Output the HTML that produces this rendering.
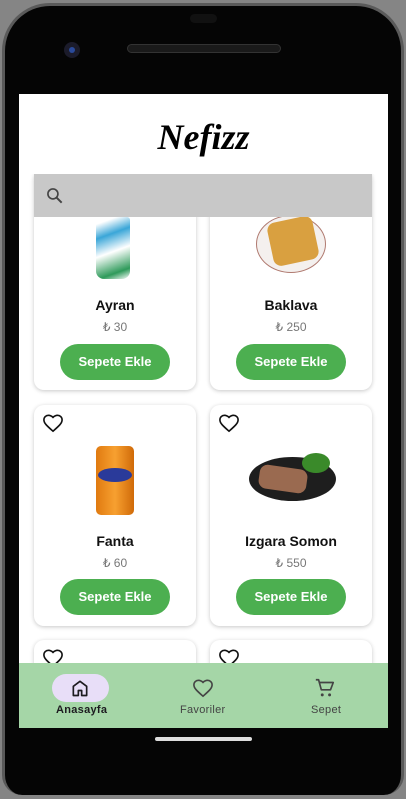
<!DOCTYPE html>
<html><head><meta charset="utf-8"><style>
*{margin:0;padding:0;box-sizing:border-box}
html,body{width:406px;height:799px;overflow:hidden}
body{background:#858585;position:relative;font-family:"Liberation Sans",sans-serif}
.phone{position:absolute;left:2px;top:3px;width:402px;height:792px;background:#050505;border-radius:48px 48px 20px 20px;border:3px solid #5a5a5a;border-bottom:none}
.screen{position:absolute;left:19px;top:94px;width:369px;height:634px;background:#fff;overflow:hidden}
.abs{position:absolute}
.card{position:absolute;width:162px;height:221px;background:#fff;border-radius:10px;box-shadow:0 1px 4px rgba(0,0,0,.22)}
.name{position:absolute;left:0;width:100%;text-align:center;font-weight:bold;font-size:14px;color:#111}
.price{position:absolute;left:0;width:100%;text-align:center;font-size:12px;color:#777}
.btn{position:absolute;left:26px;width:110px;height:36px;border-radius:18px;background:#4caf50;color:#fff;font-size:13px;font-weight:bold;text-align:center;line-height:36px}
.heart{position:absolute;left:8px;top:8px}
.nav{position:absolute;left:0;top:569px;width:369px;height:65px;background:#a5d6a7}
.lbl{position:absolute;font-size:11px;color:#444;letter-spacing:.3px}
</style></head><body>
<div class="phone"></div>
<div class="abs" style="left:127px;top:44px;width:154px;height:9px;border-radius:5px;background:#1a1a1a;border:1px solid #333"></div>
<div class="abs" style="left:190px;top:14px;width:27px;height:9px;border-radius:5px;background:#111"></div>
<div class="abs" style="left:64px;top:42px;width:16px;height:16px;border-radius:50%;background:#1b1b2a"><div class="abs" style="left:5px;top:5px;width:6px;height:6px;border-radius:50%;background:#2a4a9a"></div></div>
<div class="abs" style="left:155px;top:737px;width:97px;height:4px;border-radius:2px;background:#ddd"></div>
<div class="screen">
  <div class="card" style="left:15px;top:75px">
    <div class="abs" style="left:62px;top:48px;width:34px;height:62px;border-radius:3px 3px 8px 8px;background:linear-gradient(160deg,#fff 10%,#3aa6d8 30%,#fff 55%,#2e9a5a 85%,#fff)"></div>
    <div class="name" style="top:128px">Ayran</div><div class="price" style="top:151px">₺ 30</div>
    <div class="btn" style="top:175px">Sepete Ekle</div>
  </div>
  <div class="card" style="left:191px;top:75px">
    <div class="abs" style="left:46px;top:46px;width:70px;height:58px;border-radius:50%;background:#f4f0ee;border:1px solid #b07a70"></div>
    <div class="abs" style="left:60px;top:50px;width:46px;height:44px;border-radius:8px;background:#d9a040;transform:rotate(-12deg)"></div>
    <div class="name" style="top:128px">Baklava</div><div class="price" style="top:151px">₺ 250</div>
    <div class="btn" style="top:175px">Sepete Ekle</div>
  </div>

  <div class="abs" style="left:0;top:0;width:369px;height:80px;background:#fff"></div>
  <div class="abs" style="left:0;top:22px;width:369px;text-align:center;font-family:'Liberation Serif',serif;font-style:italic;font-weight:bold;font-size:36px;color:#000">Nefizz</div>
  <div class="abs" style="left:15px;top:80px;width:338px;height:43px;background:#c8c8c8"></div>
  <svg class="abs" style="left:26px;top:92px" width="20" height="20" viewBox="0 0 24 24"><circle cx="9.5" cy="9.5" r="6" fill="none" stroke="#444" stroke-width="2"/><path d="M14 14l6 6" stroke="#444" stroke-width="2.4"/></svg>

  <div class="card" style="left:15px;top:311px">
    <svg class="heart" width="22" height="20" viewBox="0 0 24 22"><path d="M12 20l-1.5-1.3C5 13.8 2 11 2 7.5 2 4.6 4.3 2.5 7 2.5c1.8 0 3.6.9 5 2.3 1.4-1.4 3.2-2.3 5-2.3 2.7 0 5 2.1 5 5 0 3.5-3 6.3-8.5 11.2z" fill="none" stroke="#111" stroke-width="1.8"/></svg>
    <div class="abs" style="left:62px;top:41px;width:38px;height:69px;border-radius:5px;background:linear-gradient(90deg,#e07a10,#f7a030 50%,#d06a08)"></div>
    <div class="abs" style="left:64px;top:63px;width:34px;height:14px;border-radius:50%;background:#2a3a9a"></div>
    <div class="name" style="top:128px">Fanta</div><div class="price" style="top:151px">₺ 60</div>
    <div class="btn" style="top:174px">Sepete Ekle</div>
  </div>
  <div class="card" style="left:191px;top:311px">
    <svg class="heart" width="22" height="20" viewBox="0 0 24 22"><path d="M12 20l-1.5-1.3C5 13.8 2 11 2 7.5 2 4.6 4.3 2.5 7 2.5c1.8 0 3.6.9 5 2.3 1.4-1.4 3.2-2.3 5-2.3 2.7 0 5 2.1 5 5 0 3.5-3 6.3-8.5 11.2z" fill="none" stroke="#111" stroke-width="1.8"/></svg>
    <div class="abs" style="left:39px;top:52px;width:87px;height:44px;border-radius:50%;background:#1e1e1e"></div>
    <div class="abs" style="left:49px;top:62px;width:48px;height:24px;border-radius:8px;background:#9a6a50;transform:rotate(8deg)"></div>
    <div class="abs" style="left:92px;top:48px;width:28px;height:20px;border-radius:50%;background:#3a8a2a"></div>
    <div class="name" style="top:128px">Izgara Somon</div><div class="price" style="top:151px">₺ 550</div>
    <div class="btn" style="top:174px">Sepete Ekle</div>
  </div>

  <div class="card" style="left:15px;top:546px">
    <svg class="heart" width="22" height="20" viewBox="0 0 24 22"><path d="M12 20l-1.5-1.3C5 13.8 2 11 2 7.5 2 4.6 4.3 2.5 7 2.5c1.8 0 3.6.9 5 2.3 1.4-1.4 3.2-2.3 5-2.3 2.7 0 5 2.1 5 5 0 3.5-3 6.3-8.5 11.2z" fill="none" stroke="#111" stroke-width="1.8"/></svg>
  </div>
  <div class="card" style="left:191px;top:546px">
    <svg class="heart" width="22" height="20" viewBox="0 0 24 22"><path d="M12 20l-1.5-1.3C5 13.8 2 11 2 7.5 2 4.6 4.3 2.5 7 2.5c1.8 0 3.6.9 5 2.3 1.4-1.4 3.2-2.3 5-2.3 2.7 0 5 2.1 5 5 0 3.5-3 6.3-8.5 11.2z" fill="none" stroke="#111" stroke-width="1.8"/></svg>
  </div>

  <div class="nav">
    <div class="abs" style="left:33px;top:11px;width:57px;height:28px;border-radius:14px;background:#e8def8"></div>
    <svg class="abs" style="left:51px;top:15px" width="20" height="20" viewBox="0 0 24 24"><path d="M4 21V10l8-6 8 6v11h-6v-6h-4v6z" fill="none" stroke="#1d1b20" stroke-width="2" stroke-linejoin="round"/></svg>
    <div class="lbl" style="left:37px;top:41px;font-weight:bold;color:#1d1b20">Anasayfa</div>
    <svg class="abs" style="left:173px;top:15px" width="22" height="20" viewBox="0 0 24 22"><path d="M12 20l-1.5-1.3C5 13.8 2 11 2 7.5 2 4.6 4.3 2.5 7 2.5c1.8 0 3.6.9 5 2.3 1.4-1.4 3.2-2.3 5-2.3 2.7 0 5 2.1 5 5 0 3.5-3 6.3-8.5 11.2z" fill="none" stroke="#444" stroke-width="1.8"/></svg>
    <div class="lbl" style="left:161px;top:41px">Favoriler</div>
    <svg class="abs" style="left:295px;top:14px" width="22" height="22" viewBox="0 0 24 24"><path d="M2 3h3l3 11h10l3-8H6.5" fill="none" stroke="#444" stroke-width="1.8" stroke-linejoin="round"/><circle cx="9" cy="19.5" r="1.6" fill="#444"/><circle cx="17" cy="19.5" r="1.6" fill="#444"/></svg>
    <div class="lbl" style="left:292px;top:41px">Sepet</div>
  </div>
</div>
</body></html>
